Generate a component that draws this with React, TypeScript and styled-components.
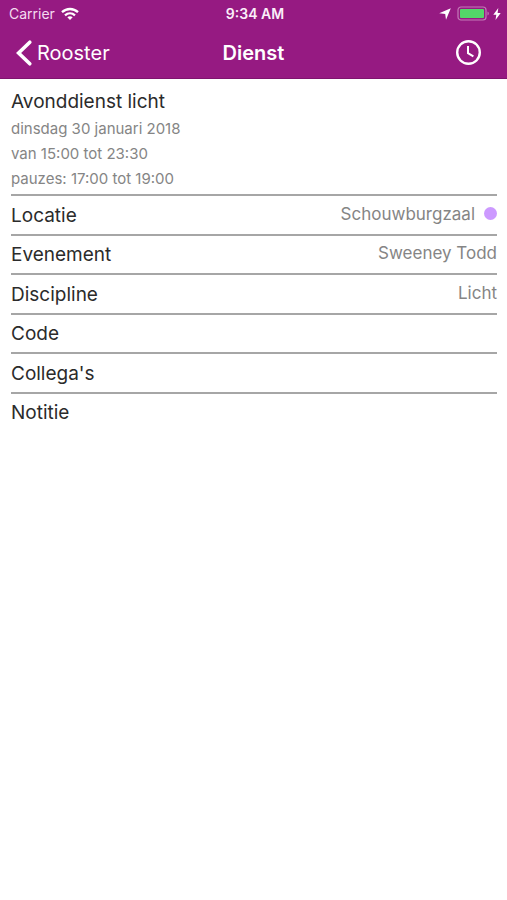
import React from "react";
import styled, { createGlobalStyle } from "styled-components";

const GlobalStyle = createGlobalStyle`
  * { box-sizing: border-box; }
  body {
    margin: 0;
    background: #fff;
    color: #2b2b2b;
    font-family: Inter, "Liberation Sans", sans-serif;
  }
`;

const Header = styled.header`
  background: #961a82;
  color: #fff;
  border-bottom: 1px solid #7f146e;
`;

const StatusBar = styled.div`
  display: grid;
  grid-template-columns: 1fr auto 1fr;
  align-items: center;
  height: 27px;
  padding: 0 6px 0 9px;
  font-size: 14px;
  line-height: 18px;
`;

const StatusGroup = styled.div<{ $end?: boolean }>`
  display: flex;
  align-items: center;
  justify-content: ${({ $end }) => ($end ? "flex-end" : "flex-start")};
  gap: ${({ $end }) => ($end ? "3px" : "6px")};
`;

const Carrier = styled.span`
  color: #f4dcf0;
`;

const Clock = styled.time`
  font-weight: 600;
  color: #fbeef9;
`;

const NavBar = styled.nav`
  display: grid;
  grid-template-columns: 1fr auto 1fr;
  align-items: center;
  height: 51px;
  padding: 0 15px;
`;

const BackButton = styled.button`
  display: flex;
  align-items: center;
  justify-self: start;
  gap: 4px;
  padding: 0;
  border: 0;
  background: none;
  color: #fff;
  font: 400 20px/26px Inter, "Liberation Sans", sans-serif;
`;

const Title = styled.h1`
  margin: 0;
  font-size: 20px;
  line-height: 26px;
  font-weight: 600;
`;

const IconButton = styled.button`
  display: flex;
  justify-self: end;
  padding: 0 10px;
  border: 0;
  background: none;
  color: #fff;
`;

const Content = styled.main`
  padding: 9px 10px 0 11px;
`;

const Summary = styled.section`
  padding-bottom: 3px;
`;

const ShiftName = styled.h2`
  margin: 0;
  font-size: 19px;
  line-height: 28px;
  font-weight: 400;
`;

const Detail = styled.p`
  margin: 0;
  color: #858585;
  font-size: 15px;
  line-height: 25px;
`;

const Fields = styled.dl`
  display: grid;
  grid-auto-rows: 1fr;
  min-height: 237px;
  margin: 0;
`;

const Field = styled.div`
  display: flex;
  align-items: center;
  justify-content: space-between;
  border-top: 2px solid #a6a6a6;
`;

const Label = styled.dt`
  padding-top: 2px;
  font-size: 19px;
  line-height: 26px;
`;

const Value = styled.dd`
  display: flex;
  align-items: center;
  gap: 9px;
  margin: 0;
  padding-bottom: 2px;
  color: #858585;
  font-size: 17px;
  line-height: 24px;
`;

const Dot = styled.span`
  width: 13px;
  height: 13px;
  border-radius: 50%;
  background: #cc99ff;
`;

const WifiIcon = () => (
  <svg width="18" height="14" viewBox="0 0 18 14" fill="none" stroke="#fff" strokeWidth="2.3" aria-hidden="true">
    <path d="M1 5.2C5.6.9 12.4.9 17 5.2" />
    <path d="M4 8.3c3-2.7 7-2.7 10 0" />
    <path d="M9 13 6.3 10.3c1.6-1.3 3.8-1.3 5.4 0z" fill="#fff" stroke="none" />
  </svg>
);

const LocationIcon = () => (
  <svg width="12" height="12" viewBox="0 0 12 12" fill="#fff" aria-hidden="true">
    <path d="M11.8.2 7 11.8 6.2 6 .2 5.3z" />
  </svg>
);

const BatteryIcon = () => (
  <svg width="33" height="15" viewBox="0 0 33 15" aria-hidden="true">
    <rect x="1" y="1" width="28" height="13" rx="3" fill="none" stroke="#c47bb8" strokeWidth="1.2" />
    <rect x="3" y="3" width="24" height="9" rx="1" fill="#53d769" />
    <path d="M30.5 5.5c1.8.8 1.8 3.2 0 4z" fill="#c47bb8" />
  </svg>
);

const BoltIcon = () => (
  <svg width="8" height="12" viewBox="0 0 8 12" fill="#fff" aria-hidden="true">
    <path d="M5.3 0 .3 6.8h3L2.5 12 7.7 5H4.6z" />
  </svg>
);

const BackIcon = () => (
  <svg width="18" height="28" viewBox="0 0 18 28" fill="none" stroke="currentColor" strokeWidth="3.6" strokeLinecap="round" aria-hidden="true">
    <path d="M14.8 3.2 3.6 14l11.2 10.8" />
  </svg>
);

const ClockIcon = () => (
  <svg width="27" height="27" viewBox="0 0 27 27" fill="none" stroke="currentColor" aria-hidden="true">
    <circle cx="13.5" cy="13.5" r="11.3" strokeWidth="2.4" />
    <path d="M13 7v7.2l5.4 3.2" strokeWidth="2" />
  </svg>
);

type FieldData = { label: string; value?: string; marked?: boolean };

const fields: FieldData[] = [
  { label: "Locatie", value: "Schouwburgzaal", marked: true },
  { label: "Evenement", value: "Sweeney Todd" },
  { label: "Discipline", value: "Licht" },
  { label: "Code" },
  { label: "Collega's" },
  { label: "Notitie" },
];

export default function App() {
  return (
    <>
      <GlobalStyle />
      <Header>
        <StatusBar>
          <StatusGroup>
            <Carrier>Carrier</Carrier>
            <WifiIcon />
          </StatusGroup>
          <Clock>9:34 AM</Clock>
          <StatusGroup $end>
            <LocationIcon />
            <span />
            <BatteryIcon />
            <BoltIcon />
          </StatusGroup>
        </StatusBar>
        <NavBar>
          <BackButton type="button">
            <BackIcon />
            Rooster
          </BackButton>
          <Title>Dienst</Title>
          <IconButton type="button" aria-label="Uren">
            <ClockIcon />
          </IconButton>
        </NavBar>
      </Header>
      <Content>
        <Summary>
          <ShiftName>Avonddienst licht</ShiftName>
          <Detail>dinsdag 30 januari 2018</Detail>
          <Detail>van 15:00 tot 23:30</Detail>
          <Detail>pauzes: 17:00 tot 19:00</Detail>
        </Summary>
        <Fields>
          {fields.map(({ label, value, marked }) => (
            <Field key={label}>
              <Label>{label}</Label>
              {value && (
                <Value>
                  {value}
                  {marked && <Dot />}
                </Value>
              )}
            </Field>
          ))}
        </Fields>
      </Content>
    </>
  );
}
